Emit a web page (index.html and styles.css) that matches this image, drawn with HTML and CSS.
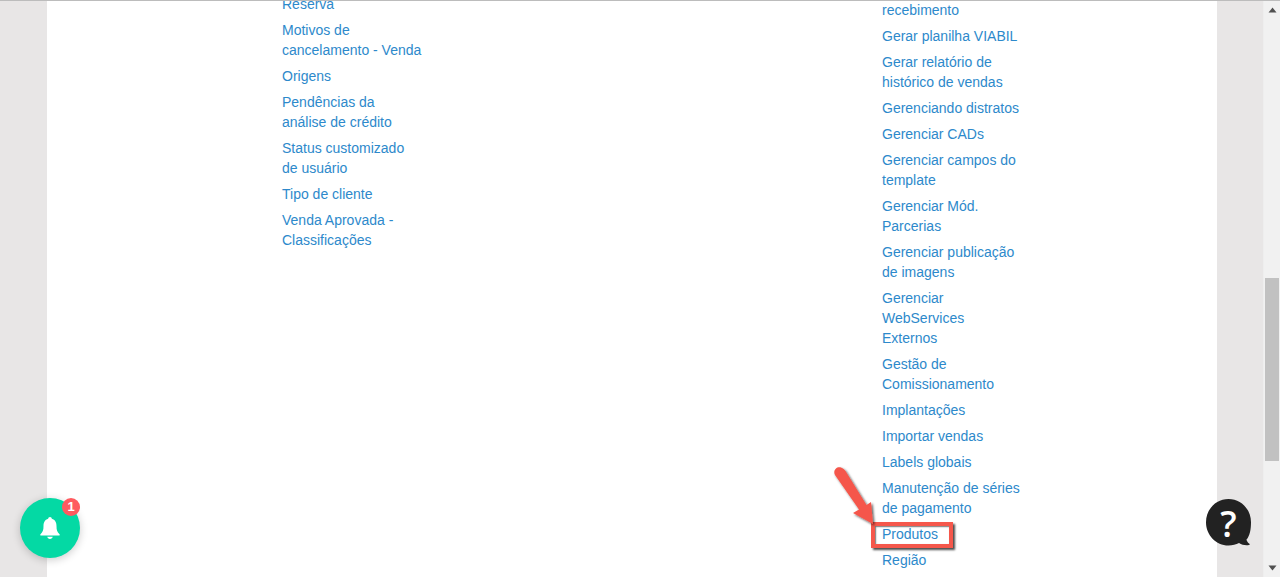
FILE: index.html
```html
<!DOCTYPE html>
<html lang="pt-BR">
<head>
<meta charset="utf-8">
<title>Configurações</title>
<link rel="stylesheet" href="styles.css">
</head>
<body>
<div class="viewport">
  <div class="gutter"></div>
  <main class="sheet">
    <ul class="links links-left">
      <li><a>Reserva</a></li>
      <li><a>Motivos de<br>cancelamento - Venda</a></li>
      <li><a>Origens</a></li>
      <li><a>Pendências da<br>análise de crédito</a></li>
      <li><a>Status customizado<br>de usuário</a></li>
      <li><a>Tipo de cliente</a></li>
      <li><a>Venda Aprovada -<br>Classificações</a></li>
    </ul>
    <ul class="links links-right">
      <li><a>recebimento</a></li>
      <li><a>Gerar planilha VIABIL</a></li>
      <li><a>Gerar relatório de<br>histórico de vendas</a></li>
      <li><a>Gerenciando distratos</a></li>
      <li><a>Gerenciar CADs</a></li>
      <li><a>Gerenciar campos do<br>template</a></li>
      <li><a>Gerenciar Mód.<br>Parcerias</a></li>
      <li><a>Gerenciar publicação<br>de imagens</a></li>
      <li><a>Gerenciar<br>WebServices<br>Externos</a></li>
      <li><a>Gestão de<br>Comissionamento</a></li>
      <li><a>Implantações</a></li>
      <li><a>Importar vendas</a></li>
      <li><a>Labels globais</a></li>
      <li><a>Manutenção de séries<br>de pagamento</a></li>
      <li><a>Produtos</a></li>
      <li><a>Região</a></li>
    </ul>
  </main>
  <div class="gutter gutter-right"></div>
  <div class="scrollbar">
    <svg class="sb-arrow" viewBox="0 0 9 6"><path d="M4.5 0.5 8.500 5.500H0.500Z"/></svg>
    <div class="sb-track"><div class="sb-thumb"></div></div>
    <svg class="sb-arrow" viewBox="0 0 9 6"><path d="M4.5 5.500 8.500 0.500H0.500Z"/></svg>
  </div>
</div>

<div class="highlight"></div>
<svg class="arrow" viewBox="832 463 50 70">
  <defs>
    <filter id="sh" x="-30%" y="-30%" width="160%" height="160%">
      <feDropShadow dx="1.500" dy="1.500" stdDeviation="1" flood-color="#000" flood-opacity=".65"/>
    </filter>
  </defs>
  <path filter="url(#sh)" fill="#f5574b" d="M835 475C832.500 470 837 466 841 467.500 843 468.200 844.500 469.500 845.500 471L866.500 505 871 502 873 524 853 513 859 509.500Z"/>
</svg>

<div class="bell-fab">
  <svg class="bell" viewBox="0 0 24 24"><path d="M12 1c-1 0-1.800.8-1.800 1.700C6.800 3.500 5.500 6.500 5.500 10c0 4-.6 6-3 8.200-.6.600-.2 1.300.5 1.300h18c.7 0 1.100-.7.500-1.300-2.400-2.200-3-4.200-3-8.200 0-3.500-1.300-6.500-4.700-7.300C13.800 1.800 13 1 12 1zM9.200 20.800c.2 1.200 1.400 2.200 2.800 2.200s2.600-1 2.800-2.200z"/></svg>
  <span class="badge">1</span>
</div>

<div class="help-fab">
  <svg class="bubble" viewBox="0 0 46 48"><path d="M22.500 0C10 0 0 10.300 0 23.200S10 46.500 22.500 46.500c4 0 7.500-1 10.500-2.500 3 2 6.500 2.500 10 2 .8-.2 1-.8.400-1.200-1.500-1-2.400-2.500-3-4C44 36.500 45 30 45 23.200 45 10.300 35 0 22.500 0Z"/></svg>
  <span class="qmark">?</span>
</div>
</body>
</html>
```
FILE: styles.css
```css
* { box-sizing: border-box; }
html, body { margin: 0; height: 100%; overflow: hidden; }
body { font-family: "Liberation Sans", Arial, sans-serif; position: relative; background: #fff; }

.viewport {
  display: flex;
  height: 577px;
  border-top: 1px solid #bcbcbc;
  overflow: hidden;
}
.gutter { width: 47px; flex: none; background: #e8e6e6; }
.gutter-right { width: 46px; }
.sheet {
  width: 1170px;
  flex: none;
  background: #fff;
  display: flex;
  align-items: flex-start;
  padding-left: 235px;
  overflow: hidden;
}
.scrollbar {
  flex: 1;
  display: flex;
  flex-direction: column;
  align-items: center;
  background: #f1f1f1;
  border-left: 1px solid #eeeeee;
}
.sb-arrow { width: 9px; height: 6px; fill: #505050; margin: 6px 0; flex: none; }
.sb-track { flex: 1; width: 100%; padding-top: 259px; display: flex; justify-content: center; }
.sb-thumb { width: 14px; height: 183px; background: #c1c1c1; }

.links { list-style: none; margin: 0; padding: 0; flex: none; display: flex; flex-direction: column; gap: 6px; font-size: 14px; line-height: 20px; color: #2d89cb; }
.links-left { margin-top: -7px; width: 600px; }
.links-right { margin-top: -1px; width: 170px; }

.highlight {
  position: absolute;
  left: 871px; top: 522px;
  width: 82px; height: 26px;
  border: 4px solid #f5574b;
  box-shadow: 2px 2px 2px rgba(0,0,0,.7), inset 1px 1px 1.500px rgba(0,0,0,.55);
}
.arrow { position: absolute; left: 832px; top: 463px; width: 50px; height: 70px; }

.bell-fab {
  position: absolute; left: 20px; top: 498px;
  width: 60px; height: 60px; border-radius: 50%;
  background: #04d9a4;
  box-shadow: 0 2px 8px rgba(0,0,0,.2);
  display: flex; align-items: center; justify-content: center;
}
.bell { width: 24px; height: 24px; fill: #fff; }
.badge {
  position: absolute; left: 42px; top: 0;
  width: 18px; height: 18px; border-radius: 50%;
  background: #ff5a5f; color: #fff;
  font-size: 13px; font-weight: 700; line-height: 18px; text-align: center;
}
.help-fab { position: absolute; left: 1206px; top: 499px; width: 46px; height: 48px; }
.bubble { width: 46px; height: 48px; fill: #222; display: block; }
.qmark {
  position: absolute; left: 0; top: 1px; width: 45px; height: 48px;
  color: #fff; font-family: "Open Sans", sans-serif; font-weight: 600; font-size: 36px; line-height: 48px; text-align: center;
}
```
